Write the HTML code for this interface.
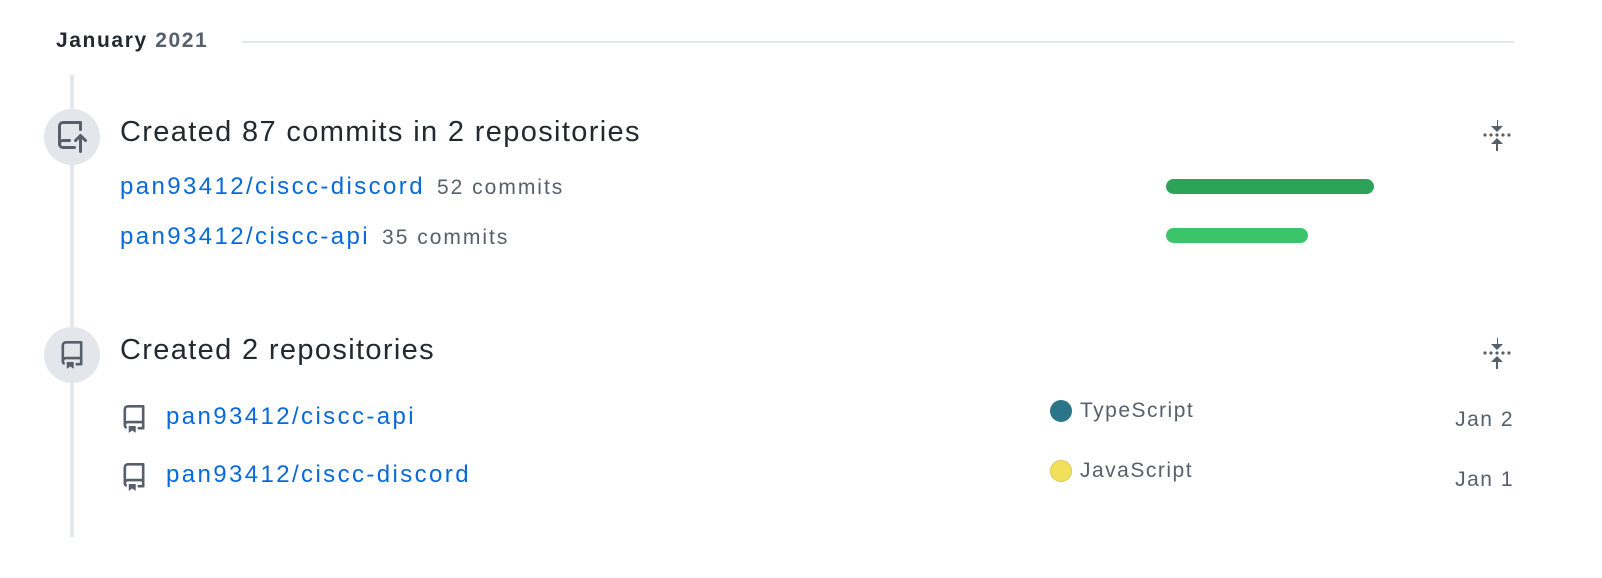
<!DOCTYPE html>
<html><head><style>
body{margin:0;width:1602px;height:578px;background:#fff;font-family:"Liberation Sans",Helvetica,Arial,sans-serif;position:relative;overflow:hidden}
.a{position:absolute;white-space:nowrap}
.blue{color:#0969da}
.gray{color:#57606a}
.lk{font-size:24px;letter-spacing:2.4px}
.cm{font-size:21px;letter-spacing:2px;margin-left:12px}
.sm{font-size:21px;letter-spacing:1.5px}
.circ{position:absolute;left:44px;width:56px;height:56px;border-radius:50%;background:#e3e6ea;display:flex;align-items:center;justify-content:center}
</style></head><body>
<div class="a" style="left:56px;top:29px;font-size:21px;letter-spacing:1.6px;font-weight:bold;color:#24292f">January <span style="color:#57606a">2021</span></div>
<div class="a" style="left:242px;top:41px;width:1272px;height:2px;background:#e4e7eb"></div>
<div class="a" style="left:70px;top:75px;width:4px;height:462px;background:#e4e7eb"></div>

<div class="circ" style="top:109px"><svg width="32" height="32" viewBox="0 0 16 16" fill="#57606a"><path d="M1 2.5A2.5 2.5 0 0 1 3.5 0h8.75a.75.75 0 0 1 .75.75v3.5a.75.75 0 0 1-1.5 0V1.5h-8a1 1 0 0 0-1 1v6.708A2.492 2.492 0 0 1 3.5 9h3.25a.75.75 0 0 1 0 1.5H3.5a1 1 0 0 0 0 2h5.75a.75.75 0 0 1 0 1.5H3.5A2.5 2.5 0 0 1 1 11.5Zm13.23 7.79h-.001l-1.224-1.224v6.184a.75.75 0 0 1-1.5 0V9.066L10.28 10.29a.75.75 0 0 1-1.06-1.061l2.505-2.504a.75.75 0 0 1 1.06 0L15.29 9.23a.751.751 0 0 1-.018 1.042.751.751 0 0 1-1.042.018Z"/></svg></div>
<div class="a" style="left:120px;top:116px;font-size:29px;letter-spacing:1.35px;color:#24292f">Created 87 commits in 2 repositories</div>
<div class="a" style="left:120px;top:173px"><span class="blue lk">pan93412/ciscc-discord</span><span class="gray cm">52 commits</span></div>
<div class="a" style="left:120px;top:223px"><span class="blue lk">pan93412/ciscc-api</span><span class="gray cm">35 commits</span></div>
<div class="a" style="left:1166px;top:179px;width:208px;height:15px;border-radius:8px;background:#2ca359"></div>
<div class="a" style="left:1166px;top:228px;width:142px;height:15px;border-radius:8px;background:#3bc46a"></div>

<svg class="a" style="left:1482px;top:120px" width="30" height="32" viewBox="0 0 30 32" fill="#57606a"><path d="M15 0v6h-1v0L9 6 15 12 21 6 16 6V0Z"/><circle cx="3" cy="15" r="1.6"/><circle cx="9" cy="15" r="1.6"/><circle cx="15" cy="15" r="1.6"/><circle cx="21" cy="15" r="1.6"/><circle cx="27" cy="15" r="1.6"/><path d="M15 18 9 24H14V31H16V24H21Z"/></svg>
<svg class="a" style="left:1482px;top:338px" width="30" height="32" viewBox="0 0 30 32" fill="#57606a"><path d="M15 0v6h-1v0L9 6 15 12 21 6 16 6V0Z"/><circle cx="3" cy="15" r="1.6"/><circle cx="9" cy="15" r="1.6"/><circle cx="15" cy="15" r="1.6"/><circle cx="21" cy="15" r="1.6"/><circle cx="27" cy="15" r="1.6"/><path d="M15 18 9 24H14V31H16V24H21Z"/></svg>

<div class="circ" style="top:327px"><svg width="28" height="28" viewBox="0 0 16 16" fill="#57606a"><path d="M2 2.5A2.5 2.5 0 0 1 4.5 0h8.75a.75.75 0 0 1 .75.75v12.5a.75.75 0 0 1-.75.75h-2.5a.75.75 0 0 1 0-1.5h1.75v-2h-8a1 1 0 0 0-.714 1.7.75.75 0 1 1-1.072 1.050A2.495 2.495 0 0 1 2 11.5Zm10.5-1h-8a1 1 0 0 0-1 1v6.708A2.486 2.486 0 0 1 4.5 9h8ZM5 12.250a.25.25 0 0 1 .25-.25h3.5a.25.25 0 0 1 .25.25v3.25a.25.25 0 0 1-.4.2l-1.45-1.087a.249.249 0 0 0-.3 0L5.4 15.7a.25.25 0 0 1-.4-.2Z"/></svg></div>
<div class="a" style="left:120px;top:334px;font-size:29px;letter-spacing:1.35px;color:#24292f">Created 2 repositories</div>

<svg class="a" style="left:120px;top:405px" width="28" height="28" viewBox="0 0 16 16" fill="#57606a"><path d="M2 2.5A2.5 2.5 0 0 1 4.5 0h8.75a.75.75 0 0 1 .75.75v12.5a.75.75 0 0 1-.75.75h-2.5a.75.75 0 0 1 0-1.5h1.75v-2h-8a1 1 0 0 0-.714 1.7.75.75 0 1 1-1.072 1.05A2.495 2.495 0 0 1 2 11.5Zm10.5-1h-8a1 1 0 0 0-1 1v6.708A2.486 2.486 0 0 1 4.5 9h8ZM5 12.25a.25.25 0 0 1 .25-.25h3.5a.25.25 0 0 1 .25.25v3.25a.25.25 0 0 1-.4.2l-1.45-1.087a.249.249 0 0 0-.3 0L5.4 15.7a.25.25 0 0 1-.4-.2Z"/></svg>
<div class="a blue lk" style="left:166px;top:403px">pan93412/ciscc-api</div>
<svg class="a" style="left:120px;top:463px" width="28" height="28" viewBox="0 0 16 16" fill="#57606a"><path d="M2 2.5A2.5 2.5 0 0 1 4.5 0h8.75a.75.75 0 0 1 .75.75v12.5a.75.75 0 0 1-.75.75h-2.5a.75.75 0 0 1 0-1.5h1.75v-2h-8a1 1 0 0 0-.714 1.7.75.75 0 1 1-1.072 1.05A2.495 2.495 0 0 1 2 11.5Zm10.5-1h-8a1 1 0 0 0-1 1v6.708A2.486 2.486 0 0 1 4.5 9h8ZM5 12.25a.25.25 0 0 1 .25-.25h3.5a.25.25 0 0 1 .25.25v3.25a.25.25 0 0 1-.4.2l-1.45-1.087a.249.249 0 0 0-.3 0L5.4 15.7a.25.25 0 0 1-.4-.2Z"/></svg>
<div class="a blue lk" style="left:166px;top:461px">pan93412/ciscc-discord</div>

<div class="a" style="left:1050px;top:400px;width:22px;height:22px;border-radius:50%;background:#2b7489"></div>
<div class="a gray sm" style="left:1080px;top:399px">TypeScript</div>
<div class="a" style="left:1050px;top:460px;width:20px;height:20px;border-radius:50%;background:#f1e05a;border:1px solid #dcc94f"></div>
<div class="a gray sm" style="left:1080px;top:459px">JavaScript</div>
<div class="a gray sm" style="right:88px;top:408px">Jan 2</div>
<div class="a gray sm" style="right:88px;top:468px">Jan 1</div>
</body></html>
